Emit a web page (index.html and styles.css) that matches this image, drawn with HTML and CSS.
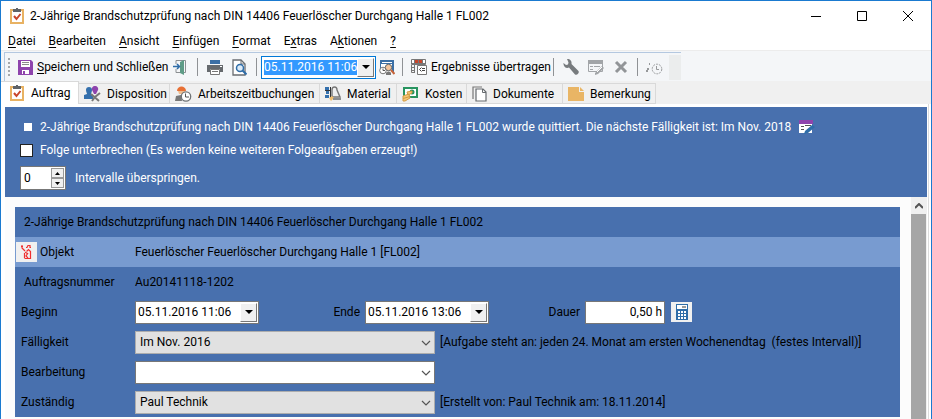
FILE: index.html
```html
<!DOCTYPE html>
<html lang="de">
<head>
<meta charset="utf-8">
<meta name="viewport" content="width=device-width, initial-scale=1">
<title>2-Jährige Brandschutzprüfung nach DIN 14406 Feuerlöscher Durchgang Halle 1 FL002</title>
<link rel="stylesheet" href="styles.css">
</head>
<body>
<svg class="defs" aria-hidden="true">
  <symbol id="clip" viewBox="0 0 14 16"><path fill="#fff" stroke="#e8b263" stroke-width="2" d="M1 2h12v13H1z"/><path fill="#5f6368" d="M3 1h3V0h2v1h3v3H3z"/><path fill="none" stroke="#c8452b" stroke-width="2" d="M4 8l2.500 3 4-5"/></symbol>
  <symbol id="chev" viewBox="0 0 10 6"><path fill="none" stroke="#555" stroke-width="1.200" d="M1 1l4 4 4-4"/></symbol>
  <symbol id="tri" viewBox="0 0 8 4"><path d="M0 0h8L4 4z"/></symbol>
</svg>
<div class="window">
  <header class="titlebar">
    <svg class="app-icon"><use href="#clip"/></svg>
    <h1>2-Jährige Brandschutzprüfung nach DIN 14406 Feuerlöscher Durchgang Halle 1 FL002</h1>
    <div class="window-buttons">
      <button aria-label="Minimieren"><svg width="10" height="10"><path stroke="#000" d="M0 5.500h10"/></svg></button>
      <button aria-label="Maximieren"><svg width="10" height="10"><path fill="none" stroke="#000" d="M.5.5h9v9h-9z"/></svg></button>
      <button aria-label="Schließen"><svg width="10" height="10"><path stroke="#000" d="M0 0l10 10M10 0L0 10"/></svg></button>
    </div>
  </header>

  <nav class="menu">
    <button><u>D</u>atei</button>
    <button><u>B</u>earbeiten</button>
    <button><u>A</u>nsicht</button>
    <button><u>E</u>infügen</button>
    <button><u>F</u>ormat</button>
    <button>E<u>x</u>tras</button>
    <button>A<u>k</u>tionen</button>
    <button><u>?</u></button>
  </nav>

  <div class="toolbar-area">
    <div class="toolbar">
      <svg class="grip" width="2" height="18"><path stroke="#a5a8ab" stroke-width="2" stroke-dasharray="2 2" d="M1 0v18"/></svg>
      <button class="save"><svg width="15" height="16" viewBox="0 0 15 16"><path fill="#8e44ad" d="M0 1h13l2 2v13H0z"/><path fill="#fff" d="M3 2h9v6H3zM4 11h7v4H4z"/><path stroke="#8a8a8a" d="M4 3.500h7M4 5.500h7"/><path fill="#8e44ad" d="M5 12h2v3H5z"/></svg><span><u>S</u>peichern und Schließen</span></button>
      <button class="exit" aria-label="Schließen ohne Speichern"><svg width="13" height="16" viewBox="0 0 13 16"><path fill="none" stroke="#8b8f92" d="M3 5V1.500h9.500v12H11M3 10v3.500h4"/><path fill="#5e9b86" d="M7 3l4-2v15l-4-2z"/><path fill="none" stroke="#2f6da8" stroke-width="1.500" d="M0 7.500h6M4 5l2.500 2.500L4 10"/></svg></button>
      <i class="sep"></i>
      <button class="icon" aria-label="Drucken"><svg width="16" height="16" viewBox="0 0 16 16"><path fill="#3b6fa5" d="M3 1h10v4H3z"/><path fill="#666a6e" d="M0 6h16v7h-3v-3H3v3H0z"/><path fill="#fff" stroke="#777" d="M3.500 10.500h9v5h-9z"/><path stroke="#777" d="M5 12.500h6"/><path fill="#fff" d="M13 7h2v1h-2z"/></svg></button>
      <button class="icon" aria-label="Seitenansicht"><svg width="15" height="17" viewBox="0 0 15 17"><path fill="#fff" stroke="#6a6e72" stroke-width="1.300" d="M1 1h8l4 4v11H1z"/><path fill="none" stroke="#6a6e72" d="M9 1v4h4"/><circle cx="8" cy="9" r="3.500" fill="#dcebf8" stroke="#2f6da8" stroke-width="1.500"/><path stroke="#2f6da8" stroke-width="2" d="M10.500 11.500l4 4"/></svg></button>
      <i class="sep"></i>
      <div class="datebox active"><input aria-label="Zeitpunkt" value="05.11.2016 11:06"><button aria-label="Kalender öffnen"><svg width="8" height="4"><use href="#tri"/></svg></button></div>
      <button class="icon" aria-label="Termin suchen"><svg width="16" height="17" viewBox="0 0 16 17"><path fill="#3b6fa5" d="M1 1h14v12H1z"/><path stroke="#fff" d="M3 3.500h10"/><path fill="#fff" d="M2 5h11v9H2z"/><circle cx="4" cy="11.500" r="3.300" fill="#fff" stroke="#777"/><path fill="none" stroke="#555" d="M4 9.500v2h2"/><circle cx="9.500" cy="8.500" r="3.200" fill="#f4c49b" stroke="#5d6468"/><path fill="#777" d="M7 14c1-2 4-2 5 0v2H7z"/><path stroke="#c7653b" stroke-width="2" d="M12 11l3.500 4"/></svg></button>
      <i class="sep"></i>
      <button class="results"><svg width="16" height="16" viewBox="0 0 16 16"><path fill="#fff" stroke="#777" d="M.5.5h14v5H.5z"/><path fill="#c8452b" d="M3 1h4v3H3zM8 1h4v3H8z"/><path fill="none" stroke="#777" d="M3.500 0v13M.5 4.500h14M7.500 1v5M11.500 1v5M.5 6v7.500H4M.5 8.500h3M.5 11.500h3"/><path fill="#fff" stroke="#777" d="M6.500 6.500h9v9h-9z"/><path fill="none" stroke="#444" d="M10.500 8.500l-2 2 2 2M11 9.500h3M11 11.500h3"/></svg><span>Ergebnisse übertragen</span></button>
      <i class="sep"></i>
      <button class="icon" aria-label="Werkzeuge"><svg width="16" height="16" viewBox="0 0 16 16"><path fill="#777b7e" d="M4 0c3-.5 5 2 4.500 5l7 7c1 2-1 4.500-3.500 3.500L6 8.500C3 10 0 7 .5 4L3 6l2-.5.500-2z"/></svg></button>
      <button class="icon" aria-label="Bearbeiten" disabled><svg width="16" height="16" viewBox="0 0 16 16"><path fill="none" stroke="#a2a5a8" d="M.5 2.500h14v10H.5z"/><path fill="#a2a5a8" d="M0 1h15v4H0zM2 7h3v1H2zM6 7h6v1H6zM2 10h3v1H2zM7 14l0 2 3-1 6-6-2-2z"/><path stroke="#fff" d="M9 13l5-5"/></svg></button>
      <button class="icon" aria-label="Löschen" disabled><svg width="14" height="14" viewBox="0 0 14 14"><path fill="none" stroke="#929598" stroke-width="3" d="M2 2l10 10M12 2L2 12"/></svg></button>
      <i class="sep"></i>
      <button class="icon" aria-label="Zeit erfassen" disabled><svg width="17" height="16" viewBox="0 0 17 16"><circle cx="11" cy="10" r="4.800" fill="none" stroke="#97999b" stroke-dasharray="2 1"/><path fill="none" stroke="#97999b" d="M10.500 7v3.500H13"/><path fill="#97999b" d="M0 11h2v2H0zM1 9h2v2H1zM3 4h1v2H3z"/></svg></button>
      <i class="toolbar-end"></i>
    </div>
  </div>

  <nav class="tabs" role="tablist">
    <button role="tab" aria-selected="true" class="t1"><svg width="14" height="16"><use href="#clip"/></svg>Auftrag</button>
    <button role="tab" aria-selected="false" class="t2"><svg width="17" height="16" viewBox="0 0 17 16"><path fill="#3470ad" d="M2 4a3 3 0 0 1 6 0c0 2-1 3-1 4l2 1v4H0V9l3-1C3 7 2 6 2 4z"/><path fill="#8e44ad" d="M11 0a3 3 0 0 1 3 4l-2 4h-2L8 4a3 3 0 0 1 3-4z"/><path fill="none" stroke="#777" stroke-width="2" d="M7 8l8 7M16 7l-5 4-3 4"/></svg>Disposition</button>
    <button role="tab" aria-selected="false" class="t3"><svg width="17" height="16" viewBox="0 0 17 16"><path fill="#e87034" d="M2 5c0-6 9-6 9 0z"/><path fill="#efbd90" d="M3 5h7v3H4z"/><path fill="#777" d="M1 10l5-1 1 6H0z"/><circle cx="11" cy="10.500" r="4.700" fill="#fff" stroke="#6f7376" stroke-width="1.300"/><path fill="none" stroke="#555" d="M10.500 7.500V11H14"/></svg>Arbeitszeitbuchungen</button>
    <button role="tab" aria-selected="false" class="t4"><svg width="16" height="16" viewBox="0 0 16 16"><path fill="#3470ad" d="M0 1h4v3H0zM1 5h3v3H1zM0 9h4v3H0z"/><path stroke="#333" d="M5.500 1v11M0 4.500h5"/><path fill="none" stroke="#777" stroke-width="1.400" d="M7 10V4c0-4 5-4 5 0l3 7H8z"/><path fill="#f0bd6c" d="M4 12l3-2 2 2-3 3z"/><path stroke="#8a8d90" stroke-width="2" d="M8 13h8"/></svg>Material</button>
    <button role="tab" aria-selected="false" class="t5"><svg width="17" height="16" viewBox="0 0 17 16"><path fill="#fff" stroke="#28945f" stroke-width="2" d="M2 2h13v9H2z"/><circle cx="10" cy="6" r="2.500" fill="#28945f"/><path fill="#f5c776" stroke="#d49b43" d="M5 6l5-1v2L6 9zM1 10l6-2 1 4-5 3H1z"/><path stroke="#d49b43" d="M1 12.500l7-2"/></svg>Kosten</button>
    <button role="tab" aria-selected="false" class="t6"><svg width="15" height="16" viewBox="0 0 15 16"><path fill="none" stroke="#777" stroke-width="1.200" d="M1 13V1h9"/><path fill="#fff" stroke="#666a6e" stroke-width="1.200" d="M4 3h7l3 3v9H4z"/><path fill="none" stroke="#666a6e" d="M10.500 3v3.500H14"/></svg>Dokumente</button>
    <button role="tab" aria-selected="false" class="t7"><svg width="16" height="14" viewBox="0 0 16 14"><path fill="#e9b565" d="M0 0h11v5h5v9H0z"/><path fill="#e9b565" d="M12 0l4 4h-4z"/></svg>Bemerkung</button>
  </nav>

  <main class="page">
    <section class="notice">
      <p class="notice-row"><i class="bullet"></i><span>2-Jährige Brandschutzprüfung nach DIN 14406 Feuerlöscher Durchgang Halle 1 FL002 wurde quittiert. Die nächste Fälligkeit ist: Im Nov. 2018</span>
        <svg class="edit-date" width="16" height="15" viewBox="0 0 16 15"><path fill="#fff" d="M0 4h13v9H0z"/><path fill="#8e44ad" d="M0 0h14v4H0z"/><path stroke="#555" d="M2 6.500h3M6 5.500h6M2 9.500h3"/><path fill="#2f6da8" d="M5 14l1-3 7-6 3 2-7 6z"/></svg></p>
      <label class="notice-row"><input type="checkbox"><span>Folge unterbrechen (Es werden keine weiteren Folgeaufgaben erzeugt!)</span></label>
      <div class="notice-row skip">
        <div class="spinner"><input id="skip" value="0"><div class="steps"><button aria-label="Mehr"><svg width="5" height="3"><path d="M0 3h5L2.500 0z"/></svg></button><button aria-label="Weniger"><svg width="5" height="3"><path d="M0 0h5L2.500 3z"/></svg></button></div></div>
        <label for="skip">Intervalle überspringen.</label>
      </div>
    </section>

    <div class="scroller">
      <form class="form">
        <h2 class="row">2-Jährige Brandschutzprüfung nach DIN 14406 Feuerlöscher Durchgang Halle 1 FL002</h2>
        <div class="row object">
          <div class="name"><button type="button" class="tile" aria-label="Objekt öffnen"><svg width="11" height="14" viewBox="0 0 11 14"><path fill="none" stroke="#f03030" stroke-width="1.200" d="M0 1.500h2M1 0v3l3 3M5 2.500h1l1-2h2v2h1M3.500 13V8M3.500 13.500h6v-7l-2-2-2 2M4 7l3 2M7 8l-2 3 2 2"/></svg></button>Objekt</div>
          <span>Feuerlöscher Feuerlöscher Durchgang Halle 1 [FL002]</span>
        </div>
        <div class="row number"><div class="name">Auftragsnummer</div><span>Au20141118-1202</span></div>
        <div class="row">
          <label class="name" for="begin">Beginn</label>
          <div class="datebox"><input id="begin" value="05.11.2016 11:06"><button type="button" aria-label="Beginn wählen"><svg width="8" height="4"><use href="#tri"/></svg></button></div>
          <label class="mid end" for="end">Ende</label>
          <div class="datebox"><input id="end" value="05.11.2016 13:06"><button type="button" aria-label="Ende wählen"><svg width="8" height="4"><use href="#tri"/></svg></button></div>
          <label class="mid span" for="duration">Dauer</label>
          <input class="duration" id="duration" value="0,50 h">
          <button type="button" class="tile calc" aria-label="Dauer berechnen"><svg width="12" height="16" viewBox="0 0 12 16"><path fill="#2f6da8" d="M0 0h12v16H0z"/><path fill="#fff" d="M1 1h10v4H1zM2 7h2v2H2zM5 7h2v2H5zM8 7h2v2H8zM2 10h2v2H2zM5 10h2v2H5zM8 10h2v2H8zM2 13h2v2H2zM5 13h2v2H5zM8 13h2v2H8z"/><path fill="#9a9a9a" d="M6 2h4v2H6z"/></svg></button>
        </div>
        <div class="row">
          <label class="name" for="due">Fälligkeit</label>
          <div class="select"><select id="due" class="grey"><option>Im Nov. 2016</option></select><svg width="10" height="6"><use href="#chev"/></svg></div>
          <span class="note">[Aufgabe steht an: jeden 24. Monat am ersten Wochenendtag &nbsp;(festes Intervall)]</span>
        </div>
        <div class="row">
          <label class="name" for="work">Bearbeitung</label>
          <div class="select"><select id="work"><option></option></select><svg width="10" height="6"><use href="#chev"/></svg></div>
        </div>
        <div class="row">
          <label class="name" for="owner">Zuständig</label>
          <div class="select"><select id="owner" class="grey"><option>Paul Technik</option></select><svg width="10" height="6"><use href="#chev"/></svg></div>
          <span class="note">[Erstellt von: Paul Technik am: 18.11.2014]</span>
        </div>
      </form>
      <div class="scrollbar"><button aria-label="Nach oben"><svg width="8" height="6"><path fill="none" stroke="#555" stroke-width="2" d="M0 5l4-4 4 4"/></svg></button><div class="thumb"></div></div>
    </div>
  </main>
</div>
</body>
</html>
```
FILE: styles.css
```css
* { box-sizing: border-box; }
html, body { height: 100%; }
body { margin: 0; background: #fff; color: #000; font: 12px/16px Roboto, "Open Sans", sans-serif; }
button, input, select { font: inherit; color: inherit; margin: 0; padding: 0; border: 0; border-radius: 0; background: none; outline: 0; }
h1, h2, p { margin: 0; font: inherit; }
svg { display: block; flex: none; }
u { text-underline-offset: 2px; text-decoration-skip-ink: none; }
.defs { position: absolute; width: 0; height: 0; }
.window { display: flex; flex-direction: column; min-height: 100%; border: 1px solid #1a7ad0; border-bottom: 0; white-space: nowrap; }

.titlebar { display: flex; align-items: center; height: 29px; padding-left: 9px; }
.app-icon { width: 14px; height: 16px; margin-right: 6px; }
.window-buttons { display: flex; margin-left: auto; }
.window-buttons button { display: grid; place-items: center; width: 46px; height: 29px; }

.menu { display: flex; gap: 13px; height: 20px; padding-left: 7px; }
.menu button { height: 20px; line-height: 22px; }

.toolbar-area { height: 31px; padding: 1px 0 0 3px; background: #f4f6f8; border-top: 1px solid #ececec; }
.toolbar { display: flex; align-items: center; width: max-content; height: 29px; padding-left: 3px; border-top: 1px solid #b4c8e0; border-left: 1px solid #b4c8e0; }
.toolbar button { display: flex; align-items: center; justify-content: center; gap: 4px; }
.grip { margin-right: 8px; }
.save { width: 147px; }
.toolbar .save, .toolbar .results { justify-content: flex-start; }
.exit { width: 28px; }
.icon { width: 25px; }
.active + .icon { width: 22px; }
.sep { width: 1px; height: 18px; margin: 0 4px; background: #8f9295; }
.results { width: 138px; }
.toolbar .results { margin-left: 4px; }
.toolbar-end { width: 12px; height: 25px; margin-left: 2px; background: #ebeded; }

.datebox { display: flex; width: 124px; height: 23px; padding: 1px; background: #fff; border: 1px solid #777; }
.datebox input { flex: 1; min-width: 0; padding-left: 1px; }
.datebox button { display: grid; place-items: center; width: 17px; background: #f0f0f0; border: 1px solid #fff; border-right-color: #777; border-bottom-color: #777; }
.datebox.active { width: 115px; border-color: #0078d7; }
.active input { margin: 2px 0 2px 1px; padding: 0; background: #3399ff; color: #fff; }
.toolbar .active button { display: grid; }

.tabs { display: flex; align-items: flex-end; height: 23px; background: #f0f0f0; }
.tabs button { display: flex; align-items: center; gap: 6px; height: 21px; padding-left: 5px; background: #f0f0f0; border: 1px solid #d9d9d9; border-left: 0; }
.tabs [aria-selected="true"] { height: 23px; gap: 7px; padding-left: 9px; background: #fff; border-bottom: 0; }
.t1 { width: 78px; }
.t2 { width: 91px; }
.t3 { width: 150px; }
.t4 { width: 77px; }
.t5 { width: 70px; }
.t6 { width: 96px; }
.t7 { width: 93px; }

.page { flex: 1; display: flex; flex-direction: column; margin-right: 2px; padding: 3px 1px 0 4px; border-right: 1px solid #dcdcdc; }
.notice { height: 90px; padding: 12px 15px 0; background: #4870ae; color: #fff; }
.notice-row { display: flex; align-items: center; height: 16px; margin-bottom: 7px; }
.bullet { width: 8px; height: 8px; margin: 0 8px 0 4px; background: #fff; }
.edit-date { margin-left: 8px; }
.notice input[type="checkbox"] { appearance: none; width: 13px; height: 13px; margin-right: 7px; background: #fff; border: 1px solid #222; }
.skip { height: 24px; gap: 9px; margin-top: 8px; }
.spinner { display: flex; width: 46px; height: 24px; padding: 1px; background: #fff; border: 1px solid #777; color: #000; }
.spinner input { flex: 1; min-width: 0; padding-left: 2px; }
.steps { display: flex; flex-direction: column; width: 13px; }
.steps button { display: grid; place-items: center; flex: 1; background: #f0f0f0; border: 1px solid #999; }

.scroller { flex: 1; display: flex; background: #fcfcfc; }
.form { flex: 1; align-self: flex-start; margin: 10px 11px 2px 10px; background: #4870ae; }
.row { display: flex; align-items: center; height: 30px; padding-left: 6px; }
h2.row { padding-left: 9px; }
.object { background: #789bd0; }
.name { display: flex; align-items: center; width: 114px; }
.object .name { margin-left: -5px; width: 119px; gap: 3px; }
.number .name { padding-left: 3px; }
.tile { display: grid; place-items: center; width: 21px; height: 20px; background: #f0f0f0; }
.mid { padding-right: 5px; text-align: right; }
.end { width: 106px; }
.span { width: 96px; }
.duration { width: 80px; height: 23px; padding-right: 2px; background: #fff; border: 1px solid #777; text-align: right; }
.calc { margin-left: 6px; }
.select { position: relative; width: 300px; height: 23px; }
.select select { appearance: none; width: 100%; height: 100%; padding-left: 4px; background: #fff; border: 1px solid #777; }
.select .grey { background: #e1e1e1; border-color: #adadad; }
.select svg { position: absolute; right: 4px; top: 9px; pointer-events: none; }
.note { margin-left: 5px; }
.scrollbar { width: 16px; background: #f0f0f0; display: flex; flex-direction: column; }
.scrollbar button { display: grid; place-items: center; height: 17px; }
.thumb { flex: 1; margin-right: 1px; background: #a6a6a6; }
```
